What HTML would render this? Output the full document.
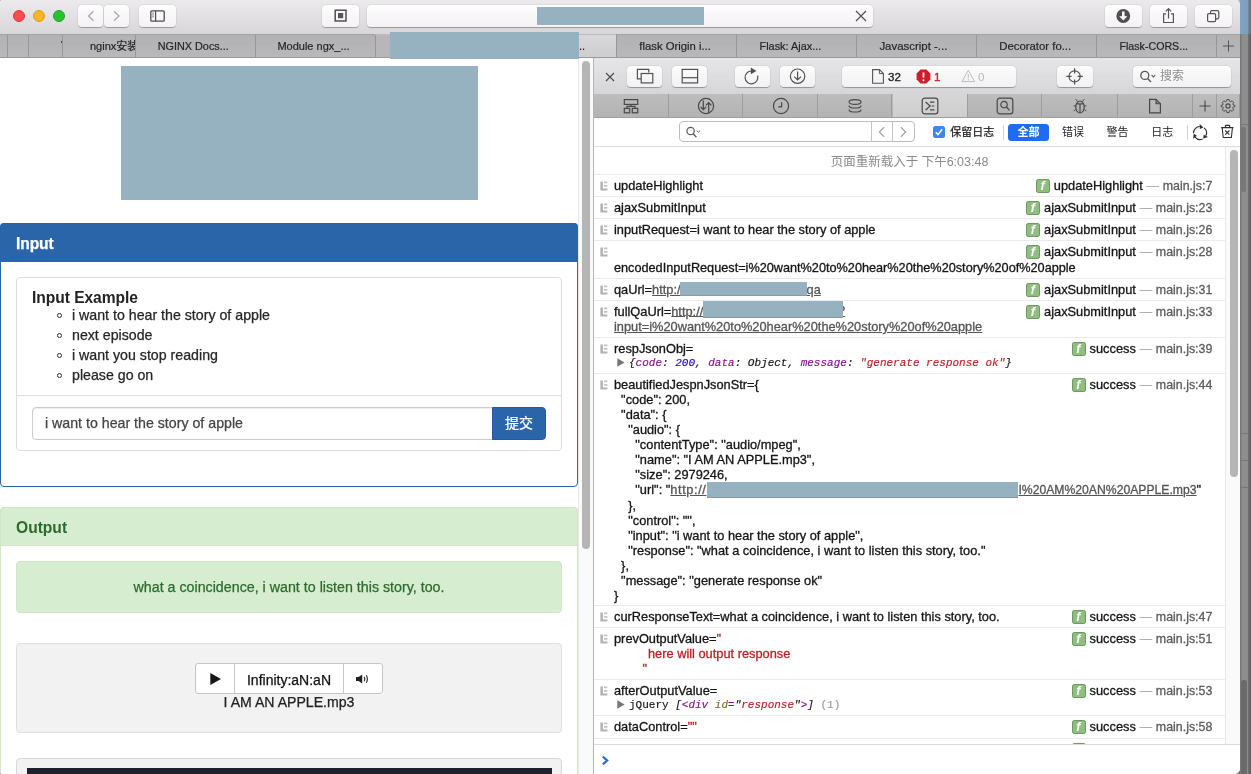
<!DOCTYPE html>
<html><head><meta charset="utf-8"><title>page</title>
<style>
*{box-sizing:border-box;margin:0;padding:0}
html,body{width:1251px;height:774px;overflow:hidden}
body{position:relative;background:#7d7d7d;font-family:"Liberation Sans","Noto Sans CJK SC",sans-serif;color:#222}
.abs{position:absolute}
#band{position:absolute;left:1230px;top:0;width:21px;height:774px;background:linear-gradient(90deg,#777 0,#777 10.3px,#7b7b7b 11px,#8e8e8e 12px,#8e8e8e 18px,#6a6a6a 18.6px,#5c5c5c 21px)}
#band .sky{position:absolute;left:0;top:0;width:21px;height:34px;background:linear-gradient(90deg,#c5d6e3 0,#c5d6e3 8px,#86a3bb 10.5px,#7fa3c1 12px,#7aa0bf 18px,#6f8090 18.6px,#66727c 21px)}
#band i{position:absolute;background:#777;border-radius:2.5px}
#band b{position:absolute;left:11px;width:8px;height:1px;background:#767676}
#win{will-change:transform;position:absolute;left:0;top:0;width:1240px;height:774px;background:#fff;border-radius:2px 5px 6px 3px;overflow:hidden}
#titlebar{position:absolute;left:0;top:0;width:1240px;height:34px;background:linear-gradient(180deg,#eceaed,#d8d6d9)}
.tl{position:absolute;top:10px;width:12px;height:12px;border-radius:50%}
.tbtn{position:absolute;top:5px;height:22px;background:linear-gradient(180deg,#fdfdfd,#f3f3f3);border-radius:4px;box-shadow:0 .5px .8px rgba(0,0,0,.28),0 0 0 .5px rgba(0,0,0,.05)}
#tabbar{position:absolute;left:0;top:34px;width:1240px;height:24px;background:linear-gradient(180deg,#b2b1b3,#b8b7b9);border-top:1px solid #a2a1a3;border-bottom:1px solid #9b9a9c}
.tab{position:absolute;top:0;height:22px;border-left:1px solid #979698;font-size:11px;line-height:23px;color:#262626;-webkit-text-stroke:.2px;text-align:center;white-space:nowrap;overflow:hidden}
.tab.act{background:linear-gradient(180deg,#d8d7d9,#cecdd0);box-shadow:0 -1px 0 #bcbbbd}

#page{position:absolute;left:0;top:58px;width:579px;height:716px;background:#fff;overflow:hidden;font-size:14.2px;color:#262626;-webkit-text-stroke:.25px}
#page .pl{position:absolute;left:0;width:578px;border-radius:4px}
#pscroll{position:absolute;left:578px;top:58px;width:15px;height:716px;background:#fafafa;border-left:1px solid #e8e8e8}
#pscroll i{position:absolute;left:3px;top:3px;width:8px;height:488px;border-radius:4px;background:#b5b5b5}
.li{position:absolute;left:72px;white-space:nowrap;line-height:20px;height:20px}
.li:before{content:"";position:absolute;left:-15.2px;top:8.3px;width:2.8px;height:2.8px;border:1.3px solid #2a2a2a;border-radius:50%}

#dev{position:absolute;left:593px;top:58px;width:647px;height:716px;background:#fff;border-left:1px solid #b4b4b4;font-size:12.8px;color:#1c1c1c}
#dtb{position:absolute;left:0;top:0;width:646px;height:36px;background:linear-gradient(180deg,#e6e5e7,#d6d5d7)}
.db{position:absolute;top:8px;height:21px;background:linear-gradient(180deg,#fcfcfc,#f1f1f1);border-radius:4px;box-shadow:0 .5px .8px rgba(0,0,0,.3),0 0 0 .5px rgba(0,0,0,.05)}
#dtabs{position:absolute;left:0;top:36px;width:646px;height:24px;background:linear-gradient(180deg,#bdbdbd,#b3b3b3);border-bottom:1px solid #9f9f9f}
#dtabs .t{position:absolute;top:0;height:23px;border-right:1px solid #9d9d9d}
#dtabs .t.act{background:linear-gradient(180deg,#d7d7d7,#cdcdcd)}
#dtabs svg{position:absolute;left:50%;top:50%;transform:translate(-50%,-50%);margin-left:.6px;margin-top:.3px}
#dfilter{position:absolute;left:0;top:60px;width:646px;height:29px;background:#fff;border-bottom:1px solid #dcdcdc;font-size:11.5px;font-family:"Liberation Sans","Noto Sans CJK SC",sans-serif}
#con{position:absolute;left:0;top:89px;width:631px;height:597px;overflow:hidden;background:#fff}
.row{position:absolute;left:0;width:631px;border-top:1px solid #ebebeb;padding:2.5px 0 0 20px;-webkit-text-stroke:.3px;color:#141414;line-height:15px;white-space:pre}
.row .ic{position:absolute;left:6px;top:5.5px}
.loc{position:absolute;right:12.7px;top:2.5px;line-height:15px;white-space:nowrap;color:#141414}
.loc .f{display:inline-block;vertical-align:-3.4px;width:14px;height:14px;margin-right:4px;border-radius:2.2px;background:#90bd80;border:1px solid #6c995d;position:relative}
.loc .f:after{content:"f";position:absolute;left:0;top:-1.5px;width:12px;text-align:center;font:italic bold 12.5px/14px "Liberation Sans",sans-serif;color:#fff;-webkit-text-stroke:0;top:-1.3px;left:-.2px}
.loc .d{color:#a8a8a8;margin:0 3.6px;-webkit-text-stroke:0}
.loc .m{color:#5c5c5c;font-size:12.4px}
.u{text-decoration:underline;color:#555}
.mono{font-family:"Liberation Mono",monospace;font-size:11px;font-style:italic;position:relative;top:-1.3px;-webkit-text-stroke:.15px}
.red{color:#bd1f25}
#dscroll{position:absolute;left:631px;top:89px;width:15px;height:597px;background:#fafafa;border-left:1px solid #e8e8e8}
#dscroll i{position:absolute;left:4px;top:3px;width:8px;height:327px;border-radius:4px;background:#b5b5b5}
#prompt{position:absolute;left:0;top:686px;width:646px;height:30px;background:#fff;border-top:1px solid #dcdcdc}
.rd{display:inline-block;vertical-align:-3.5px;height:14.2px;background:#96b2c1;border-bottom:1px solid #8a9aa3;position:relative;z-index:2}
</style></head><body>
<div id="band"><div class="sky"></div><b style="top:124px"></b><b style="top:433px"></b><b style="top:460px"></b><b style="top:487px"></b><i style="left:11px;top:127px;width:5px;height:65px"></i><i style="left:10.5px;top:680px;width:6px;height:100px;background:#6a6a6a"></i></div>
<div id="win">
<div id="titlebar">
 <div class="tl" style="left:13px;background:#fc4a4f;border:.5px solid #df3a3e"></div>
 <div class="tl" style="left:33px;background:#fdb524;border:.5px solid #de9c1d"></div>
 <div class="tl" style="left:53px;background:#29c131;border:.5px solid #1ea826"></div>
 <div class="tbtn" style="left:78px;width:25px"><svg class="abs" style="left:0;top:0" width="25" height="22"><path d="M15.5 6.2L10.5 11L15.5 15.8" stroke="#a9a9a9" stroke-width="1.3" fill="none"/></svg></div>
 <div class="tbtn" style="left:104px;width:25px"><svg class="abs" style="left:0;top:0" width="25" height="22"><path d="M10 6.2L15 11L10 15.8" stroke="#a9a9a9" stroke-width="1.3" fill="none"/></svg></div>
 <div class="tbtn" style="left:139px;width:37px"><svg class="abs" style="left:0;top:0" width="37" height="22"><rect x="11.8" y="5.8" width="13.4" height="10.4" rx="1" stroke="#4e4e4e" stroke-width="1.3" fill="none"/><path d="M16.6 5.8V16.2" stroke="#4e4e4e" stroke-width="1.2"/><path d="M13.2 8.2H15M13.2 10H15M13.2 11.8H15" stroke="#6a6a6a" stroke-width=".8"/></svg></div>
 <div class="tbtn" style="left:322px;width:37px"><svg class="abs" style="left:0;top:0" width="37" height="22"><rect x="13.2" y="5.2" width="10.8" height="10.8" stroke="#444" stroke-width="1.4" fill="none"/><rect x="16" y="8" width="5.2" height="5.2" fill="#555"/></svg></div>
 <div class="tbtn" style="left:367px;width:506px"><div class="abs" style="left:169.6px;top:2.4px;width:167.8px;height:18px;background:#96b2c1"></div><svg class="abs" style="left:487px;top:4px" width="14" height="14"><path d="M2 2L12 12M12 2L2 12" stroke="#555" stroke-width="1.3"/></svg></div>
 <div class="tbtn" style="left:1105px;width:37px"><svg class="abs" style="left:0;top:0" width="37" height="22"><circle cx="18.3" cy="11" r="6.9" fill="#4f4f4f"/><path d="M18.3 6.5V12.5" stroke="#fff" stroke-width="2.6"/><path d="M14.2 11.2H22.4L18.3 15.6Z" fill="#fff"/></svg></div>
 <div class="tbtn" style="left:1150px;width:37px"><svg class="abs" style="left:0;top:0" width="37" height="22"><path d="M16 8.9H13.6V17.5H23.4V8.9H21" stroke="#555" stroke-width="1.2" fill="none"/><path d="M18.5 13.5V4M15.8 6.3L18.5 3.6L21.2 6.3" stroke="#555" stroke-width="1.2" fill="none"/></svg></div>
 <div class="tbtn" style="left:1195px;width:37px"><svg class="abs" style="left:0;top:0" width="37" height="22"><rect x="12.6" y="8.6" width="8" height="8" rx="1.2" stroke="#555" stroke-width="1.2" fill="none"/><path d="M15.6 8.4V6.8Q15.6 5.6 16.8 5.6H22.6Q23.8 5.6 23.8 6.8V12.6Q23.8 13.8 22.6 13.8H21" stroke="#555" stroke-width="1.2" fill="none"/></svg></div>
</div>
<div id="tabbar">
 <div class="tab" style="left:7px;width:22px"></div>
 <div class="tab" style="left:28px;width:35px"><i style="position:absolute;left:31.6px;top:6.4px;width:1.4px;height:1.6px;background:#4a4a4a"></i></div>
 <div class="tab" style="left:62px;width:74px"><span style="position:absolute;left:27.0px;font-size:11px">nginx安装</span></div>
 <div class="tab" style="left:135px;width:121px"><span style="position:absolute;left:21.7px;font-size:10.85px">NGINX Docs...</span></div>
 <div class="tab" style="left:255px;width:121px"><span style="position:absolute;left:21.4px;font-size:11px">Module ngx_...</span></div>
 <div class="tab act" style="left:375px;width:241px"><span style="position:absolute;left:203px">..</span></div>
 <div class="tab" style="left:616px;width:120px"><span style="position:absolute;left:22.3px;font-size:11.3px">flask Origin i...</span></div>
 <div class="tab" style="left:736px;width:120px"><span style="position:absolute;left:22.5px;font-size:10.9px">Flask: Ajax...</span></div>
 <div class="tab" style="left:856px;width:120px"><span style="position:absolute;left:22.4px;font-size:11.45px">Javascript -...</span></div>
 <div class="tab" style="left:976px;width:120px"><span style="position:absolute;left:22.3px;font-size:11.35px">Decorator fo...</span></div>
 <div class="tab" style="left:1096px;width:120px"><span style="position:absolute;left:22.5px;font-size:10.65px">Flask-CORS...</span></div>
 <div class="tab" style="left:1216px;width:24px"><svg class="abs" style="left:0;top:0" width="24" height="22"><path d="M6 11H17M11.5 5.5V16.5" stroke="#555" stroke-width="1"/></svg></div>
</div>

<div id="page">
 <div class="abs" style="left:121.4px;top:8.4px;width:356.6px;height:133.4px;background:#96b2c1"></div>
 <!-- input panel (page y = abs y - 58) -->
 <div class="pl" style="top:165px;height:264px;border:1px solid #2b65a8;background:#fff"></div>
 <div class="pl" style="top:165px;height:39px;background:#2a65a9;border-radius:4px 4px 0 0"></div>
 <div class="abs" style="left:16px;top:176.4px;font-size:15.6px;line-height:20px;color:#fff;font-weight:bold;letter-spacing:-.1px">Input</div>
 <div class="abs" style="left:16px;top:219px;width:546px;height:174px;border:1px solid #ddd;border-radius:4px"></div>
 <div class="abs" style="left:32px;top:229.8px;font-size:15.6px;line-height:20px;color:#222;font-weight:bold;letter-spacing:-.05px;-webkit-text-stroke:0">Input Example</div>
 <div class="li" style="top:247px">i want to hear the story of apple</div>
 <div class="li" style="top:267px">next episode</div>
 <div class="li" style="top:287px">i want you stop reading</div>
 <div class="li" style="top:307px">please go on</div>
 <div class="abs" style="left:17px;top:337px;width:544px;height:1px;background:#ddd"></div>
 <div class="abs" style="left:32px;top:349px;width:461px;height:33px;border:1px solid #ccc;border-radius:4px 0 0 4px;box-shadow:inset 0 1px 1px rgba(0,0,0,.075);padding-left:12px;line-height:31px;font-size:14.2px;color:#444">i want to hear the story of apple</div>
 <div class="abs" style="left:492px;top:349px;width:54px;height:33px;background:#2a65a9;border:1px solid #25599a;border-radius:0 4px 4px 0;color:#fff;text-align:center;line-height:31px;font-size:14px">提交</div>
 <!-- output panel -->
 <div class="pl" style="top:449px;height:300px;border:1px solid #d6e9c6;background:#fff;border-radius:4px 4px 0 0"></div>
 <div class="pl" style="top:449px;height:39px;background:#d7edd0;border:1px solid #d0e6c5;border-radius:4px 4px 0 0"></div>
 <div class="abs" style="left:16px;top:460.4px;font-size:15.6px;line-height:20px;color:#2d6a30;font-weight:bold;letter-spacing:0px;-webkit-text-stroke:0">Output</div>
 <div class="abs" style="left:16px;top:503px;width:546px;height:52px;background:#d7edd0;border:1px solid #cfe5c3;border-radius:4px;text-align:center;line-height:50px;color:#2d6a30;font-size:14.25px">what a coincidence, i want to listen this story, too.</div>
 <div class="abs" style="left:16px;top:585px;width:546px;height:90px;background:#f2f2f2;border:1px solid #e0e0e0;border-radius:4px"></div>
 <div class="abs" style="left:195px;top:605px;width:188px;height:31px;background:#fff;border:1px solid #c6c6c6;border-radius:3px"></div>
 <div class="abs" style="left:234px;top:605px;width:1px;height:31px;background:#c6c6c6"></div>
 <div class="abs" style="left:343px;top:605px;width:1px;height:31px;background:#c6c6c6"></div>
 <svg class="abs" style="left:209px;top:614px" width="14" height="14" viewBox="0 0 14 14"><path d="M1.3 0.9 L12 7 L1.3 13.1 Z" fill="#161616"/></svg>
 <div class="abs" style="left:235px;top:613px;width:108px;text-align:center;font-size:14px;line-height:18px;color:#111">Infinity:aN:aN</div>
 <svg class="abs" style="left:355px;top:614px" width="16" height="14" viewBox="0 0 16 14"><path d="M1 5 H3.6 L7.2 2.4 V11.6 L3.6 9 H1 Z" fill="#222"/><path d="M9.2 4.8 Q10.5 7 9.2 9.2 M11.3 3.2 Q13.5 7 11.3 10.8" stroke="#222" stroke-width="1.1" fill="none"/></svg>
 <div class="abs" style="left:16px;top:635px;width:546px;text-align:center;font-size:14.1px;line-height:18px;color:#222">I AM AN APPLE.mp3</div>
 <div class="abs" style="left:16px;top:700px;width:546px;height:40px;background:#f2f2f2;border:1px solid #d8d8d8;border-radius:4px"></div>
 <div class="abs" style="left:27px;top:710px;width:525px;height:10px;background:#1e202b"></div>
</div>
<div id="pscroll"><i></i></div>

<div id="dev">
<div id="dtb">
 <svg class="abs" style="left:11px;top:14px" width="10" height="10"><path d="M1 1L9 9M9 1L1 9" stroke="#4a4a4a" stroke-width="1.1"/></svg>
 <div class="db" style="left:33px;width:35px"><svg class="abs" style="left:0;top:0" width="35" height="21"><path d="M14 12.8H10.4V3.4H21.8V6.6" stroke="#505050" stroke-width="1.2" fill="none"/><rect x="14.2" y="7.5" width="11.6" height="9.4" stroke="#505050" stroke-width="1.2" fill="none"/></svg></div>
 <div class="db" style="left:78px;width:35px"><svg class="abs" style="left:0;top:0" width="35" height="21"><rect x="10.2" y="3.4" width="15.4" height="13.5" stroke="#505050" stroke-width="1.2" fill="none"/><path d="M10.2 11.7H25.6" stroke="#505050" stroke-width="1.2" fill="none"/></svg></div>
 <div class="db" style="left:141px;width:35px"><svg class="abs" style="left:-.8px;top:0" width="35" height="21"><path d="M17.5 5 A6.4 6.4 0 1 0 23.6 9.6" stroke="#505050" stroke-width="1.2" fill="none"/><path d="M16.8 1.6L22.4 4.9L16.8 8.2Z" fill="#505050"/></svg></div>
 <div class="db" style="left:186px;width:35px"><svg class="abs" style="left:0;top:0" width="35" height="21"><circle cx="17.6" cy="10.2" r="7.2" stroke="#505050" stroke-width="1.2" fill="none"/><path d="M17.6 5.6V13.6M14.2 10.6L17.6 14L21 10.6" stroke="#505050" stroke-width="1.2" fill="none"/></svg></div>
 <div class="db" style="left:248px;width:174px">
  <svg class="abs" style="left:29px;top:2px" width="14" height="17"><path d="M1.6 1.6H8.4L12.4 5.6V15.2H1.6Z" stroke="#555" stroke-width="1.1" fill="none"/><path d="M8.4 1.6V5.6H12.4" stroke="#555" stroke-width="1" fill="none"/></svg>
  <div class="abs" style="left:46px;top:3px;font-size:11.6px;line-height:15px;color:#262626;-webkit-text-stroke:.35px">32</div>
  <svg class="abs" style="left:74px;top:3px" width="15" height="15"><path d="M4.6 0.6H10.4L14.4 4.6V10.4L10.4 14.4H4.6L0.6 10.4V4.6Z" fill="#c9212b"/><path d="M7.5 3.4V8.6" stroke="#fff" stroke-width="1.7"/><circle cx="7.5" cy="11.2" r="1" fill="#fff"/></svg>
  <div class="abs" style="left:92px;top:3px;font-size:11.6px;line-height:15px;color:#c9212b;-webkit-text-stroke:.35px #c9212b">1</div>
  <svg class="abs" style="left:119px;top:3px" width="15" height="14"><path d="M7.3 1.2L13.6 12.6H1Z" stroke="#bdbdbd" stroke-width="1" fill="none"/><path d="M7.3 5V9" stroke="#bdbdbd" stroke-width="1"/><circle cx="7.3" cy="10.8" r=".7" fill="#bdbdbd"/></svg>
  <div class="abs" style="left:136px;top:3px;font-size:11.6px;line-height:15px;color:#b8b8b8">0</div>
 </div>
 <div class="db" style="left:462.5px;width:36px"><svg class="abs" style="left:0;top:0" width="36" height="21"><circle cx="17.6" cy="10.4" r="5.6" stroke="#505050" stroke-width="1.2" fill="none"/><path d="M17.6 2.2V7.4M17.6 13.4V18.6M9.4 10.4H14.6M20.6 10.4H25.8" stroke="#505050" stroke-width="1.2" fill="none"/></svg></div>
 <div class="db" style="left:539px;width:98px">
  <svg class="abs" style="left:6px;top:3px" width="18" height="15"><circle cx="5.8" cy="6.4" r="4" stroke="#5a5a5a" stroke-width="1.3" fill="none"/><path d="M8.6 9.4L12 13" stroke="#5a5a5a" stroke-width="1.4"/><path d="M12.6 6.2L14.4 8L16.2 6.2" stroke="#5a5a5a" stroke-width="1.1" fill="none"/></svg>
  <div class="abs" style="left:27px;top:2px;font-size:12px;line-height:17px;color:#8e8e8e">搜索</div>
 </div>
</div>
<div id="dtabs">
 <div class="t" style="left:0.0px;width:74.6px"><svg width="16" height="16"><rect x="1.3" y="1.6" width="13.4" height="4.8" stroke="#484848" stroke-width="1.2" fill="none"/><rect x="1.3" y="10.4" width="5.4" height="4.4" stroke="#484848" stroke-width="1.2" fill="none"/><rect x="9.3" y="10.4" width="5.4" height="4.4" stroke="#484848" stroke-width="1.2" fill="none"/><path d="M4 10.4V8.4H12V10.4M8 6.4V8.4" stroke="#484848" stroke-width="1.2" fill="none"/></svg></div>
 <div class="t" style="left:74.6px;width:74.7px"><svg width="18" height="18"><circle cx="9" cy="9" r="7.6" stroke="#484848" stroke-width="1.2" fill="none"/><path d="M6.3 3.4V12.4M3.6 9.8L6.3 12.6L9 9.8" stroke="#484848" stroke-width="1.2" fill="none"/><path d="M11.7 16V5.8M9 8.4L11.7 5.6L14.4 8.4" stroke="#484848" stroke-width="1.2" fill="none"/></svg></div>
 <div class="t" style="left:149.3px;width:74.5px"><svg width="18" height="18"><circle cx="9" cy="9" r="7.6" stroke="#484848" stroke-width="1.2" fill="none"/><path d="M9.6 5.2V9.8H6.2" stroke="#484848" stroke-width="1.2" fill="none"/></svg></div>
 <div class="t" style="left:223.8px;width:74.7px"><svg width="16" height="16"><ellipse cx="8" cy="4" rx="6" ry="2.4" stroke="#484848" stroke-width="1.2" fill="none"/><path d="M2 7.4Q2 10 8 10Q14 10 14 7.4" stroke="#484848" stroke-width="1.2" fill="none"/><path d="M2 11.4Q2 14 8 14Q14 14 14 11.4" stroke="#484848" stroke-width="1.2" fill="none"/></svg></div>
 <div class="t act" style="left:298.5px;width:75.1px"><svg width="18" height="18"><rect x="1.2" y="1.2" width="15.6" height="15.6" rx="2.6" stroke="#484848" stroke-width="1.2" fill="none"/><path d="M4.6 5L9.2 9L4.6 13" stroke="#484848" stroke-width="1.2" fill="none"/><path d="M9 5.2H13.4M10.6 9H13.4M9 12.8H13.4" stroke="#484848" stroke-width="1.2" fill="none"/></svg></div>
 <div class="t" style="left:373.6px;width:74.9px"><svg width="18" height="18"><rect x="1.2" y="1.2" width="15.6" height="15.6" rx="2.6" stroke="#484848" stroke-width="1.2" fill="none"/><circle cx="8" cy="7.6" r="3.2" stroke="#484848" stroke-width="1.2" fill="none"/><path d="M10.4 10L13.6 13.4" stroke="#484848" stroke-width="1.2" fill="none"/></svg></div>
 <div class="t" style="left:448.5px;width:75.0px"><svg width="16" height="18"><ellipse cx="8" cy="10" rx="4.2" ry="6" stroke="#484848" stroke-width="1.2" fill="none"/><path d="M4.4 6.8H11.6M8 6.8V15.8" stroke="#484848" stroke-width="1.2" fill="none"/><path d="M5.4 4.4L3.8 2.2M10.6 4.4L12.2 2.2M3.8 9H1.6M3.8 12.4L1.8 14M12.2 9H14.4M12.2 12.4L14.2 14" stroke="#484848" stroke-width="1" fill="none"/></svg></div>
 <div class="t" style="left:523.5px;width:75.0px"><svg width="14" height="16"><path d="M1.6 1.4H8L12.4 5.8V14.8H1.6Z" stroke="#484848" stroke-width="1.2" fill="none"/><path d="M8 1.4V5.8H12.4" stroke="#484848" stroke-width="1.1" fill="none"/><path d="M8.3 3.4V5.5H10.4Z" fill="#484848"/></svg></div>
 <div class="t" style="left:598.5px;width:24.1px"><svg width="14" height="14"><path d="M1.5 7H12.5M7 1.5V12.5" stroke="#484848" stroke-width="1.1"/></svg></div>
 <div class="t" style="left:622.6px;width:23.4px"><svg width="16" height="16" viewBox="-8 -8 16 16"><path d="M-1.3 -7.2H1.3L1.8 -5.2L3.0 -4.7L4.8 -5.7L6.6 -3.9L5.6 -2.1L6.0 -0.9L8 -0.4V1.0L6.0 1.6L5.5 2.8L6.6 4.6L4.8 6.4L3.0 5.4L1.8 5.9L1.3 7.9H-1.3L-1.8 5.9L-3.0 5.4L-4.8 6.4L-6.6 4.6L-5.5 2.8L-6.0 1.6L-8 1.0V-0.4L-6.0 -0.9L-5.6 -2.1L-6.6 -3.9L-4.8 -5.7L-3.0 -4.7L-1.8 -5.2Z" stroke="#484848" stroke-width="1.1" fill="none" transform="scale(.86) translate(0,-.3)"/><circle r="2.1" cx="0" cy="0" stroke="#484848" stroke-width="1.1" fill="none"/></svg></div>
</div>
<div id="dfilter">
 <div class="abs" style="left:84.5px;top:2.8px;width:236px;height:21.4px;border:1px solid #bdbdbd;border-radius:4px"></div>
 <svg class="abs" style="left:91px;top:7px" width="18" height="15"><circle cx="5.6" cy="6" r="3.7" stroke="#5a5a5a" stroke-width="1.2" fill="none"/><path d="M8.2 8.8L11.4 12.2" stroke="#5a5a5a" stroke-width="1.3"/><path d="M11.8 5.6L13.4 7.2L15 5.6" stroke="#5a5a5a" stroke-width="1" fill="none"/></svg>
 <div class="abs" style="left:276.6px;top:3.5px;width:1px;height:20px;background:#c4c4c4"></div>
 <div class="abs" style="left:297.6px;top:3.5px;width:1px;height:20px;background:#c4c4c4"></div>
 <svg class="abs" style="left:282px;top:8px" width="12" height="12"><path d="M8.2 1.2L3.4 6L8.2 10.8" stroke="#9a9a9a" stroke-width="1.1" fill="none"/></svg>
 <svg class="abs" style="left:303px;top:8px" width="12" height="12"><path d="M3.8 1.2L8.6 6L3.8 10.8" stroke="#9a9a9a" stroke-width="1.1" fill="none"/></svg>
 <div class="abs" style="left:339px;top:8.4px;width:11.8px;height:11.8px;border-radius:2.5px;background:#3b86f2"><svg class="abs" style="left:0;top:0" width="12" height="12"><path d="M2.8 6.2L5 8.6L9.2 3.2" stroke="#fff" stroke-width="1.5" fill="none"/></svg></div>
 <div class="abs" style="left:356.3px;top:6px;font-size:11px;line-height:16px;color:#222;white-space:nowrap;-webkit-text-stroke:.25px">保留日志</div>
 <div class="abs" style="left:409px;top:7px;width:1px;height:15px;background:#d0d0d0"></div>
 <div class="abs" style="left:414.3px;top:6px;width:40.4px;height:17px;border-radius:3.5px;background:#1f6cf0;color:#fff;font-size:11px;line-height:16.5px;text-align:center;font-weight:bold">全部</div>
 <div class="abs" style="left:468px;top:6px;font-size:11px;line-height:16px;color:#222">错误</div>
 <div class="abs" style="left:512.5px;top:6px;font-size:11px;line-height:16px;color:#222">警告</div>
 <div class="abs" style="left:557.2px;top:6px;font-size:11px;line-height:16px;color:#222">日志</div>
 <div class="abs" style="left:592.6px;top:7px;width:1px;height:15px;background:#d0d0d0"></div>
 <svg class="abs" style="left:597px;top:6.2px" width="18" height="18" viewBox="-9 -9 18 18"><g stroke="#2e2e2e" stroke-width="1.15" fill="none"><path d="M-6.50 0.23A6.5 6.5 0 0 1 -0.23 -6.50"/><path d="M4.00 -5.12A6.5 6.5 0 0 1 5.84 2.85"/><path d="M2.64 5.94A6.5 6.5 0 0 1 -4.98 4.18"/></g><g fill="#2e2e2e"><path d="M-0.14 -4.10L-0.31 -8.89L3.38 -5.40Z"/><path d="M3.69 1.80L8.00 3.90L3.19 5.52Z"/><path d="M-3.14 2.64L-6.82 5.72L-6.34 0.67Z"/></g></svg>
 <svg class="abs" style="left:626px;top:6px" width="15" height="16"><path d="M1.2 3.6H13.4M5.4 3.4V1.7Q5.4 1.4 5.8 1.4H9.3Q9.7 1.4 9.7 1.7V3.4" stroke="#2e2e2e" stroke-width="1.1" fill="none"/><path d="M2.2 3.8L3.2 13.5H11.4L12.4 3.8" stroke="#2e2e2e" stroke-width="1.1" fill="none"/><path d="M5.2 6.5L9.4 10.6M9.4 6.5L5.2 10.6" stroke="#2e2e2e" stroke-width="1.05"/></svg>
</div>
<div id="con">
 <div class="row" style="top:0;height:27px;border-top:0;padding:7.5px 0 0 0;text-align:center;color:#8a8a8a;font-size:12.5px;width:631px;-webkit-text-stroke:0">页面重新载入于 下午6:03:48</div>
 <div class="row" style="top:27px;height:22px"><svg class="ic" width="8" height="10" viewBox="0 0 8 10"><path d="M0.4 0.4H2.9V7.6H7.4V9.4H0.4Z" fill="#b2b2b2"/><path d="M4 0.6H7.4V2.2H4ZM4 4.1H7.4V5.7H4Z" fill="#c2c2c2"/></svg>updateHighlight<span class="loc"><span class="f"></span>updateHighlight<span class="d">—</span><span class="m">main.js:7</span></span></div>
 <div class="row" style="top:49px;height:22px"><svg class="ic" width="8" height="10" viewBox="0 0 8 10"><path d="M0.4 0.4H2.9V7.6H7.4V9.4H0.4Z" fill="#b2b2b2"/><path d="M4 0.6H7.4V2.2H4ZM4 4.1H7.4V5.7H4Z" fill="#c2c2c2"/></svg>ajaxSubmitInput<span class="loc"><span class="f"></span>ajaxSubmitInput<span class="d">—</span><span class="m">main.js:23</span></span></div>
 <div class="row" style="top:71px;height:22px"><svg class="ic" width="8" height="10" viewBox="0 0 8 10"><path d="M0.4 0.4H2.9V7.6H7.4V9.4H0.4Z" fill="#b2b2b2"/><path d="M4 0.6H7.4V2.2H4ZM4 4.1H7.4V5.7H4Z" fill="#c2c2c2"/></svg>inputRequest=i want to hear the story of apple<span class="loc"><span class="f"></span>ajaxSubmitInput<span class="d">—</span><span class="m">main.js:26</span></span></div>
 <div class="row" style="top:93px;height:38px"><svg class="ic" width="8" height="10" viewBox="0 0 8 10"><path d="M0.4 0.4H2.9V7.6H7.4V9.4H0.4Z" fill="#b2b2b2"/><path d="M4 0.6H7.4V2.2H4ZM4 4.1H7.4V5.7H4Z" fill="#c2c2c2"/></svg>
<span style="position:relative;top:1.2px;font-size:12.7px">encodedInputRequest=i%20want%20to%20hear%20the%20story%20of%20apple</span><span class="loc"><span class="f"></span>ajaxSubmitInput<span class="d">—</span><span class="m">main.js:28</span></span></div>
 <div class="row" style="top:131px;height:22px"><svg class="ic" width="8" height="10" viewBox="0 0 8 10"><path d="M0.4 0.4H2.9V7.6H7.4V9.4H0.4Z" fill="#b2b2b2"/><path d="M4 0.6H7.4V2.2H4ZM4 4.1H7.4V5.7H4Z" fill="#c2c2c2"/></svg>qaUrl=<span class="u">http:/</span><span class="rd" id="rd1" style="width:126.4px;top:-1.3px;margin-left:-.4px"></span><span class="u">qa</span><span class="loc"><span class="f"></span>ajaxSubmitInput<span class="d">—</span><span class="m">main.js:31</span></span></div>
 <div class="row" style="top:153px;height:37px;padding-top:1.7px"><svg class="ic" width="8" height="10" viewBox="0 0 8 10"><path d="M0.4 0.4H2.9V7.6H7.4V9.4H0.4Z" fill="#b2b2b2"/><path d="M4 0.6H7.4V2.2H4ZM4 4.1H7.4V5.7H4Z" fill="#c2c2c2"/></svg>fullQaUrl=<span class="u">http://</span><span class="rd" id="rd2" style="width:139.8px;height:16.3px;top:-1.3px;margin-left:0px"></span><span class="u" style="margin-left:-5px">?</span><span class="u">
input=i%20want%20to%20hear%20the%20story%20of%20apple</span><span class="loc"><span class="f"></span>ajaxSubmitInput<span class="d">—</span><span class="m">main.js:33</span></span></div>
 <div class="row" style="top:190px;height:36px"><svg class="ic" width="8" height="10" viewBox="0 0 8 10"><path d="M0.4 0.4H2.9V7.6H7.4V9.4H0.4Z" fill="#b2b2b2"/><path d="M4 0.6H7.4V2.2H4ZM4 4.1H7.4V5.7H4Z" fill="#c2c2c2"/></svg>respJsonObj=
<svg style="position:absolute;left:23px;top:19.7px" width="8" height="9" viewBox="0 0 8 9"><path d="M0.3 0.3L7.6 4.5L0.3 8.7Z" fill="#777"/></svg><span class="mono" style="margin-left:15px">{<span style="color:#881391">code</span>: <span style="color:#1c00cf">200</span>, <span style="color:#881391">data</span>: Object, <span style="color:#881391">message</span>: <span class="red">"generate response ok"</span>}</span><span class="loc"><span class="f"></span>success<span class="d">—</span><span class="m">main.js:39</span></span></div>
 <div class="row" style="top:226px;height:232px"><svg class="ic" width="8" height="10" viewBox="0 0 8 10"><path d="M0.4 0.4H2.9V7.6H7.4V9.4H0.4Z" fill="#b2b2b2"/><path d="M4 0.6H7.4V2.2H4ZM4 4.1H7.4V5.7H4Z" fill="#c2c2c2"/></svg>beautifiedJespnJsonStr={
  "code": 200,
  "data": {
    "audio": {
      "contentType": "audio/mpeg",
      "name": "I AM AN APPLE.mp3",
      "size": 2979246,
      "url": "<span class="u" style="letter-spacing:.6px">http://</span><span class="rd" id="rd3" style="width:311.9px;height:15.5px;top:.9px;margin-left:0px"></span><span class="u" style="font-size:12.2px">I%20AM%20AN%20APPLE.mp3</span>"
    },
    "control": "",
    "input": "i want to hear the story of apple",
    "response": "what a coincidence, i want to listen this story, too."
  },
  "message": "generate response ok"
}<span class="loc"><span class="f"></span>success<span class="d">—</span><span class="m">main.js:44</span></span></div>
 <div class="row" style="top:458px;height:22px"><svg class="ic" width="8" height="10" viewBox="0 0 8 10"><path d="M0.4 0.4H2.9V7.6H7.4V9.4H0.4Z" fill="#b2b2b2"/><path d="M4 0.6H7.4V2.2H4ZM4 4.1H7.4V5.7H4Z" fill="#c2c2c2"/></svg>curResponseText=what a coincidence, i want to listen this story, too.<span class="loc"><span class="f"></span>success<span class="d">—</span><span class="m">main.js:47</span></span></div>
 <div class="row" style="top:480px;height:52px"><svg class="ic" width="8" height="10" viewBox="0 0 8 10"><path d="M0.4 0.4H2.9V7.6H7.4V9.4H0.4Z" fill="#b2b2b2"/><path d="M4 0.6H7.4V2.2H4ZM4 4.1H7.4V5.7H4Z" fill="#c2c2c2"/></svg>prevOutputValue=<span class="red">"
<span style="margin-left:34px"></span>here will output response
        "</span><span class="loc"><span class="f"></span>success<span class="d">—</span><span class="m">main.js:51</span></span></div>
 <div class="row" style="top:532px;height:36px"><svg class="ic" width="8" height="10" viewBox="0 0 8 10"><path d="M0.4 0.4H2.9V7.6H7.4V9.4H0.4Z" fill="#b2b2b2"/><path d="M4 0.6H7.4V2.2H4ZM4 4.1H7.4V5.7H4Z" fill="#c2c2c2"/></svg>afterOutputValue=
<svg style="position:absolute;left:23px;top:19.7px" width="8" height="9" viewBox="0 0 8 9"><path d="M0.3 0.3L7.6 4.5L0.3 8.7Z" fill="#777"/></svg><span class="mono" style="margin-left:15px"><span style="font-style:normal">jQuery</span> [<span style="color:#881391">&lt;div</span> <span style="color:#836f1c">id</span><span style="color:#881391">=</span>"<span class="red">response</span>"<span style="color:#881391">&gt;</span>] <span style="color:#999;font-style:normal">(1)</span></span><span class="loc"><span class="f"></span>success<span class="d">—</span><span class="m">main.js:53</span></span></div>
 <div class="row" style="top:568px;height:23px"><svg class="ic" width="8" height="10" viewBox="0 0 8 10"><path d="M0.4 0.4H2.9V7.6H7.4V9.4H0.4Z" fill="#b2b2b2"/><path d="M4 0.6H7.4V2.2H4ZM4 4.1H7.4V5.7H4Z" fill="#c2c2c2"/></svg>dataControl=<span class="red">""</span><span class="loc"><span class="f"></span>success<span class="d">—</span><span class="m">main.js:58</span></span></div>
 <div class="row" style="top:591px;height:22px"><svg class="ic" width="8" height="10" viewBox="0 0 8 10"><path d="M0.4 0.4H2.9V7.6H7.4V9.4H0.4Z" fill="#b2b2b2"/><path d="M4 0.6H7.4V2.2H4ZM4 4.1H7.4V5.7H4Z" fill="#c2c2c2"/></svg><span style="color:#999">isAudioPaused</span><span class="loc"><span class="f"></span>success<span class="d">—</span><span class="m">main.js:60</span></span></div>
</div>
<div id="dscroll"><i></i></div>
<div id="prompt"><svg style="position:absolute;left:6.5px;top:9.5px" width="9" height="11" viewBox="0 0 9 11"><path d="M1.8 1.6L6.2 5.5L1.8 9.4" stroke="#2f69d9" stroke-width="2.2" fill="none"/></svg></div>
</div>

<div class="abs" style="left:376px;top:35px;width:16px;height:22px;background:#b8b6b9"></div><div class="abs" style="left:390.2px;top:32.4px;width:189.1px;height:26.6px;background:#96b2c1"></div>
</div>
</body></html>
